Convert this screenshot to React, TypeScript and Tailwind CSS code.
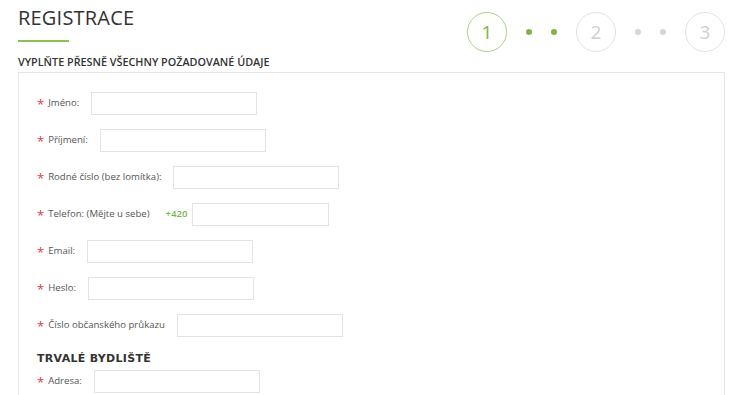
import React from 'react';

type Field = { label: string; width: string; prefix?: string };

const fields: Field[] = [
  { label: 'Jméno:', width: 'w-[166px]' },
  { label: 'Příjmení:', width: 'w-[166px]' },
  { label: 'Rodné číslo (bez lomítka):', width: 'w-[166px]' },
  { label: 'Telefon: (Mějte u sebe)', width: 'w-[137px]', prefix: '+420' },
  { label: 'Email:', width: 'w-[166px]' },
  { label: 'Heslo:', width: 'w-[166px]' },
  { label: 'Číslo občanského průkazu', width: 'w-[166px]' },
];

const FormRow: React.FC<{ field: Field }> = ({ field }) => (
  <div className="flex items-center h-[23px]">
    <span className="text-[#e0393e] text-[13px] leading-none mr-[4px] mt-[1px]">*</span>
    <span className="text-[9.6px] text-[#555]">{field.label}</span>
    {field.prefix && <span className="ml-[16px] text-[9.6px] text-[#7ab648] font-semibold">{field.prefix}</span>}
    <input
      className={`${field.width} h-[23px] border border-[#e3e3e3] outline-none ${field.prefix ? 'ml-[4px]' : 'ml-[12px]'}`}
    />
  </div>
);

const StepCircle: React.FC<{ n: number; active?: boolean }> = ({ n, active }) => (
  <div
    className={`w-[40px] h-[40px] rounded-full border flex items-center justify-center text-[19px] ${
      active ? 'border-[#a9d18a] text-[#7ab648]' : 'border-[#e3e3e3] text-[#cfcfcf]'
    }`}
  >
    {n}
  </div>
);

const Dot: React.FC<{ active?: boolean }> = ({ active }) => (
  <div className={`w-[6px] h-[6px] rounded-full ${active ? 'bg-[#7ab648]' : 'bg-[#d6d6d6]'}`} />
);

export default function App() {
  return (
    <div className="bg-white w-[756px] h-[395px] overflow-hidden px-[18px]" style={{ fontFamily: '"Open Sans", sans-serif' }}>
      <div className="w-[707px]">
        <div className="flex justify-between items-start">
          <div className="pt-[6px]">
            <h1 className="text-[20px] leading-[24px] text-[#333] tracking-[0.2px]">REGISTRACE</h1>
            <div className="mt-[10px] w-[51px] h-[2px] bg-[#8cc152]" />
          </div>
          <div className="flex items-center pt-[12px] gap-[19px]">
            <StepCircle n={1} active />
            <Dot active />
            <Dot active />
            <StepCircle n={2} />
            <Dot />
            <Dot />
            <StepCircle n={3} />
          </div>
        </div>
        <h2 className="mt-[3px] text-[10.8px] font-semibold text-[#333] leading-[14px]">
          VYPLŇTE PŘESNĚ VŠECHNY POŽADOVANÉ ÚDAJE
        </h2>
        <div className="mt-[3px] border border-[#e6e6e6] h-[400px] pl-[18px] pt-[19px]">
          <div className="flex flex-col gap-[14px]">
            {fields.map((f) => (
              <FormRow key={f.label} field={f} />
            ))}
          </div>
          <h3
            className="mt-[15px] text-[11px] font-bold text-[#333] tracking-[0.3px] leading-[14px]"
            style={{ fontFamily: '"DejaVu Sans", sans-serif' }}
          >
            TRVALÉ BYDLIŠTĚ
          </h3>
          <div className="mt-[4px]">
            <FormRow field={{ label: 'Adresa:', width: 'w-[166px]' }} />
          </div>
        </div>
      </div>
    </div>
  );
}
